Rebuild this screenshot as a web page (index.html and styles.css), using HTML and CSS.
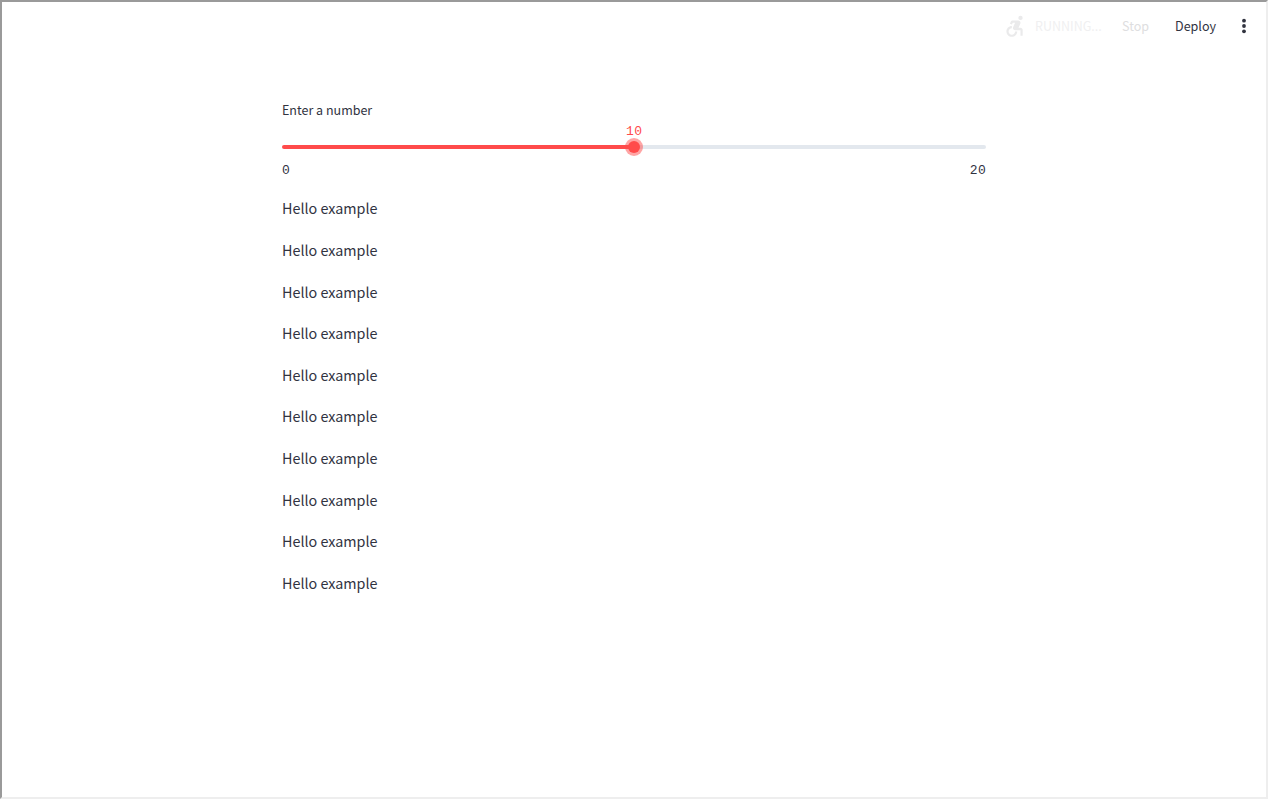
FILE: index.html
```html
<!DOCTYPE html>
<html lang="en">
<head>
<meta charset="utf-8">
<title>Slider example</title>
<link rel="stylesheet" href="styles.css">
</head>
<body>
<div class="frame">
  <header class="toolbar">
    <svg class="running-icon" viewBox="0 0 24 24" fill="currentColor"><circle cx="18" cy="4.54" r="2"/><path d="M15 17h-2c0 1.65-1.35 3-3 3s-3-1.35-3-3 1.35-3 3-3v-2c-2.76 0-5 2.24-5 5s2.24 5 5 5 5-2.24 5-5zm3-3.5h-1.86l1.67-3.67C18.42 8.5 17.44 7 15.96 7h-5.2c-.81 0-1.54.47-1.87 1.2L8.22 10l1.92.53.65-1.53H13l-1.83 4.1c-.6 1.33.39 2.9 1.85 2.9H18v5h2v-5.5c0-1.1-.9-2-2-2z"/></svg>
    <span class="running">RUNNING...</span>
    <span class="stop">Stop</span>
    <span class="deploy">Deploy</span>
    <svg class="menu" viewBox="0 0 20 20" fill="currentColor"><circle cx="10" cy="4.7" r="1.9"/><circle cx="10" cy="10" r="1.9"/><circle cx="10" cy="15.3" r="1.9"/></svg>
  </header>
  <main class="content">
    <label class="label">Enter a number</label>
    <div class="value">10</div>
    <div class="track"><div class="thumb"></div></div>
    <div class="limits"><span>0</span><span>20</span></div>
    <div class="messages">
      <p>Hello example</p>
      <p>Hello example</p>
      <p>Hello example</p>
      <p>Hello example</p>
      <p>Hello example</p>
      <p>Hello example</p>
      <p>Hello example</p>
      <p>Hello example</p>
      <p>Hello example</p>
      <p>Hello example</p>
    </div>
  </main>
</div>
</body>
</html>
```
FILE: styles.css
```css
* { box-sizing: border-box; }
body { margin: 0; }
.frame {
  height: 799px;
  border: 2px solid;
  border-color: #9a9a9a #eeeeee #eeeeee #9a9a9a;
  background: #fff;
  color: #31333f;
  font-family: "Noto Sans CJK SC", "Noto Sans", sans-serif;
}
.toolbar {
  display: flex;
  align-items: center;
  justify-content: flex-end;
  height: 48px;
  padding-right: 12px;
  font-size: 12.55px;
  line-height: 20px;
}
.running-icon { width: 26px; height: 26px; color: #eaeaeb; }
.running { width: 66px; margin: 0 21px 0 8px; color: #f0f0f1; font-size: 12.5px; white-space: nowrap; }
.stop { width: 28px; margin-right: 25px; color: #dedee0; }
.deploy { width: 42px; margin-right: 17px; }
.menu { width: 20px; height: 20px; }
.content { width: 704px; margin: 50px auto 0; }
.label { display: block; height: 22px; font-size: 12.5px; line-height: 20px; }
.value {
  height: 23px;
  color: #ff4b4b;
  font: 13px/20px "Liberation Mono", monospace;
  letter-spacing: .6px;
  text-indent: .6px;
  text-align: center;
}
.track {
  display: flex;
  align-items: center;
  justify-content: center;
  height: 4px;
  border-radius: 4px;
  background: linear-gradient(to right, #ff4b4b 50%, #e3e8ee 50%);
}
.thumb {
  flex: none;
  width: 12px;
  height: 12px;
  border-radius: 50%;
  background: #ff4b4b;
  box-shadow: 0 0 0 3px rgba(255, 75, 75, .5);
}
.limits {
  display: flex;
  justify-content: space-between;
  height: 46.4px;
  margin-right: -.5px;
  padding-top: 12px;
  font: 13px/20px "Liberation Mono", monospace;
  letter-spacing: .6px;
}
.messages { display: grid; gap: 16px; font-size: 14.35px; line-height: 25.6px; }
.messages p { margin: 0; }
```
